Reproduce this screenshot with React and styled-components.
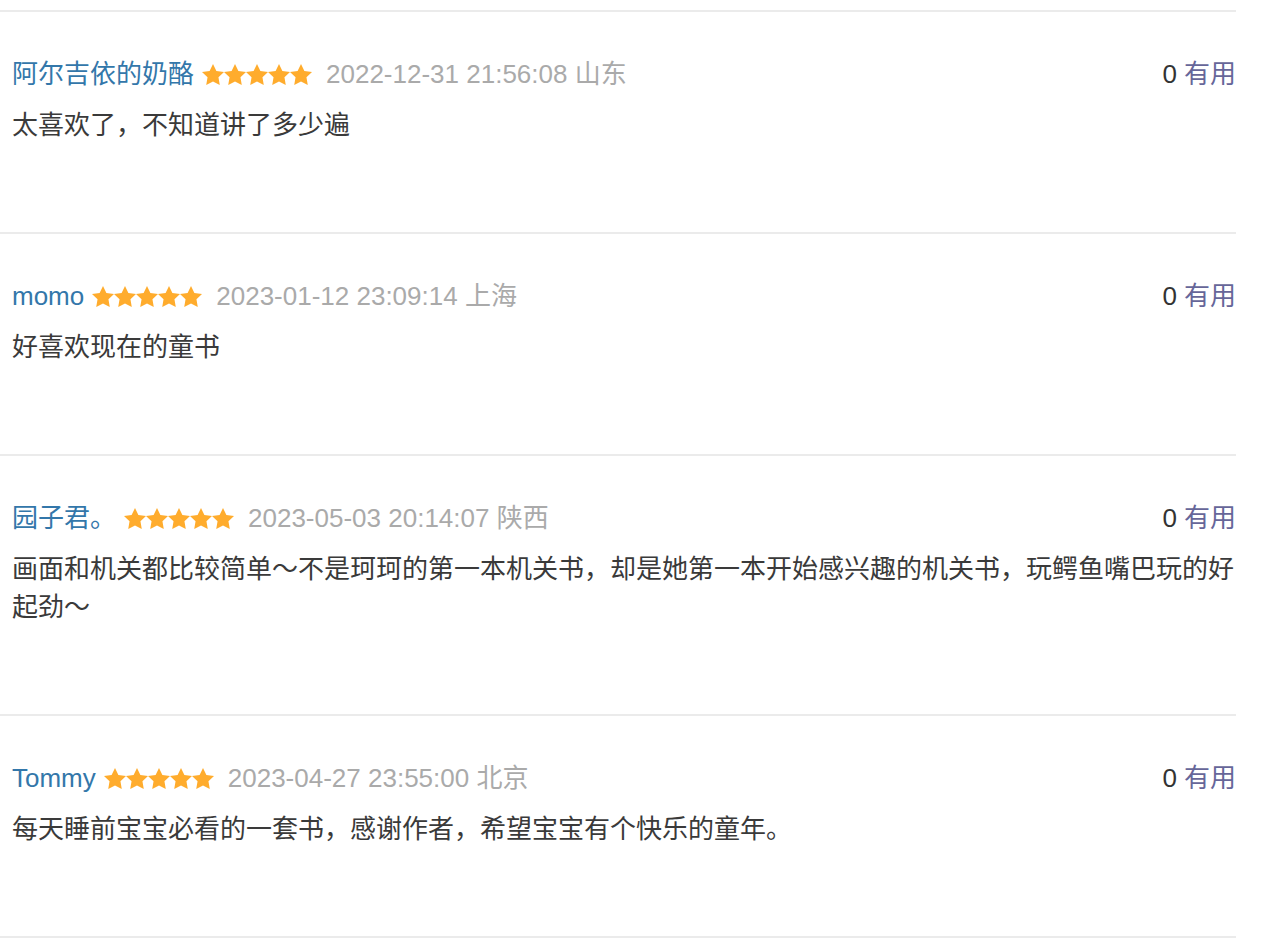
import React from 'react';
import styled, { createGlobalStyle } from 'styled-components';

const GlobalStyle = createGlobalStyle`
    body {
        margin: 0;
        background: #fff;
        font-family: "Liberation Sans", Arial, "Noto Sans CJK SC", sans-serif;
    }
`;

const Page = styled.div`
    width: 1236px;
    padding-top: 10px;
`;

const Item = styled.div`
    border-top: 2px solid #ebebeb;
    padding: 44px 0 88px 12px;
    &:last-child {
        border-bottom: 2px solid #ebebeb;
    }
`;

const Header = styled.div`
    display: flex;
    align-items: center;
    justify-content: space-between;
    font-size: 26px;
    line-height: 37px;
`;

const Meta = styled.div`
    display: flex;
    align-items: center;
`;

const Name = styled.a`
    color: #3377aa;
    text-decoration: none;
`;

const Stars = styled.span`
    display: inline-flex;
    margin: 0 14px 0 8px;
`;

const Time = styled.span`
    color: #aaaaaa;
`;

const Vote = styled.div`
    color: #333;
    white-space: nowrap;
`;

const Useful = styled.a`
    color: #666699;
    text-decoration: none;
    margin-left: 7px;
`;

const Content = styled.p`
    margin: 13px 0 0;
    font-size: 26px;
    line-height: 38px;
    color: #3a3a3a;
`;

// star drawn edge to edge so neighbours touch, as in the reference
const Star = () => (
    <svg width="22" height="21" viewBox="0.3 0.6 23.4 22.3" preserveAspectRatio="none">
        <path
            fill="#ffac2d"
            d="M12 0.6l3.6 7.4 8.1 1.1-5.9 5.7 1.4 8.1L12 19.1l-7.2 3.8 1.4-8.1L.3 9.1l8.1-1.1z"
        />
    </svg>
);

const reviews = [
    { name: '阿尔吉依的奶酪', time: '2022-12-31 21:56:08 山东', text: '太喜欢了，不知道讲了多少遍' },
    { name: 'momo', time: '2023-01-12 23:09:14 上海', text: '好喜欢现在的童书' },
    { name: '园子君。', time: '2023-05-03 20:14:07 陕西', text: '画面和机关都比较简单～不是珂珂的第一本机关书，却是她第一本开始感兴趣的机关书，玩鳄鱼嘴巴玩的好起劲～' },
    { name: 'Tommy', time: '2023-04-27 23:55:00 北京', text: '每天睡前宝宝必看的一套书，感谢作者，希望宝宝有个快乐的童年。' },
];

export default function App()
{
    return (
        <Page>
            <GlobalStyle />
            { reviews.map((r, i) => (
                <Item key={ i }>
                    <Header>
                        <Meta>
                            <Name href="#">{ r.name }</Name>
                            <Stars>
                                { [0, 1, 2, 3, 4].map(n => <Star key={ n } />) }
                            </Stars>
                            <Time>{ r.time }</Time>
                        </Meta>
                        <Vote>0<Useful href="#">有用</Useful></Vote>
                    </Header>
                    <Content>{ r.text }</Content>
                </Item>
            )) }
        </Page>
    );
}
